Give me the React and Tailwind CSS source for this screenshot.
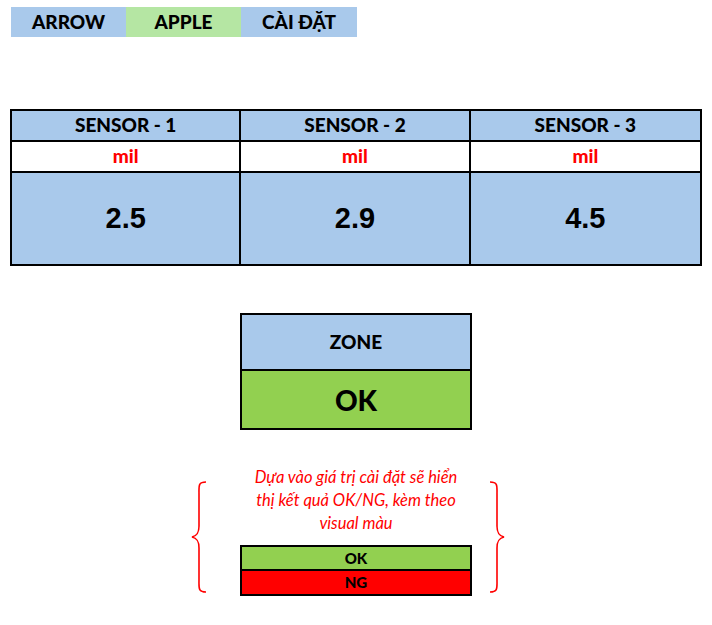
import React from "react";

const cal = { fontFamily: "Lato, 'Open Sans', sans-serif" };

function Brace({ flip }) {
  return (
    <svg width="20" height="114" viewBox="0 0 20 114" className={flip ? "-scale-x-100" : ""}>
      <path
        d="M16 2 C 8 2, 9 6, 9 14 L 9 46 C 9 54, 6 56, 2 57 C 6 58, 9 60, 9 68 L 9 100 C 9 108, 8 112, 16 112"
        fill="none"
        stroke="#ff0000"
        strokeWidth="1.6"
      />
    </svg>
  );
}

export default function App() {
  const sensors = [
    { name: "SENSOR - 1", v: "2.5" },
    { name: "SENSOR - 2", v: "2.9" },
    { name: "SENSOR - 3", v: "4.5" },
  ];
  return (
    <div className="w-[712px] h-[625px] bg-white relative overflow-hidden" style={cal}>
      <div className="flex ml-[11px] pt-[7px]">
        <div className="w-[115px] h-[30px] bg-[#a9c9eb] flex items-center justify-center text-[19px] font-black text-black">ARROW</div>
        <div className="w-[115px] h-[30px] bg-[#b5e6a3] flex items-center justify-center text-[19px] font-black text-black">APPLE</div>
        <div className="w-[116px] h-[30px] bg-[#a9c9eb] flex items-center justify-center text-[19px] font-black text-black">CÀI ĐẶT</div>
      </div>

      <div className="ml-[10px] mt-[72px] w-[692px] border-2 border-black grid grid-cols-3">
        {sensors.map((s, i) => (
          <div key={s.name} className={i < 2 ? "border-r-2 border-black" : ""}>
            <div className="h-[31px] bg-[#a9c9eb] border-b-2 border-black flex items-center justify-center text-[19px] font-black text-black">
              {s.name}
            </div>
            <div className="h-[31px] bg-white border-b-2 border-black flex items-center justify-center text-[19px] font-black text-[#ff0000]">
              mil
            </div>
            <div
              className="h-[91px] bg-[#a9c9eb] flex items-center justify-center text-[29px] font-bold text-black"
              style={{ fontFamily: "'Liberation Sans', Arial, sans-serif" }}
            >
              {s.v}
            </div>
          </div>
        ))}
      </div>

      <div className="ml-[240px] mt-[47px] w-[232px] border-2 border-black">
        <div className="h-[56px] bg-[#a9c9eb] border-b-2 border-black flex items-center justify-center text-[19px] font-black text-black">
          ZONE
        </div>
        <div className="h-[57px] bg-[#92d050] flex items-center justify-center text-[28px] font-black text-black">
          OK
        </div>
      </div>

      <div className="flex mt-[36px] ml-[190px]">
        <div className="mt-[14px]">
          <Brace />
        </div>
        <div className="ml-[30px] w-[232px] flex flex-col items-center">
          <div className="w-[222px] text-center italic text-[#ff0000] text-[16.5px] leading-[23px]">
            Dựa vào giá trị cài đặt sẽ hiển thị kết quả OK/NG, kèm theo visual màu
          </div>
          <div className="mt-[10px] w-[232px] border-2 border-black">
            <div className="h-[24px] bg-[#92d050] border-b-2 border-black flex items-center justify-center text-[15px] font-black text-black">OK</div>
            <div className="h-[23px] bg-[#ff0000] flex items-center justify-center text-[15px] font-black text-black">NG</div>
          </div>
        </div>
        <div className="mt-[14px] ml-[14px]">
          <Brace flip />
        </div>
      </div>
    </div>
  );
}
